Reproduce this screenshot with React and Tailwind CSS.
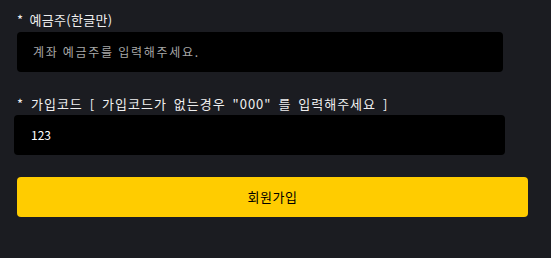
export default function App() {
  const font = { fontFamily: '"Noto Sans CJK KR", "Noto Sans", sans-serif' };
  return (
    <div className="w-[551px] h-[258px] bg-[#1b1c21] text-white" style={font}>
      <div className="flex flex-col pt-[12px]">
        <div className="px-[17px] text-[13px] tracking-[0.3px] [word-spacing:3px] leading-[16px] h-[16px] text-[#f0f0f0]">* 예금주(한글만)</div>
        <div className="mt-[4px] ml-[17px] w-[486px] h-[40px] bg-black rounded-[4px] flex items-center pl-[16px] text-[12px] tracking-[1.7px] text-[#a8a8a8]">
          계좌 예금주를 입력해주세요.
        </div>
        <div className="mt-[24px] px-[17px] text-[13px] tracking-[1px] [word-spacing:3px] leading-[16px] h-[16px] text-[#f0f0f0] whitespace-nowrap">
          * 가입코드 [ 가입코드가 없는경우 "000" 를 입력해주세요 ]
        </div>
        <div className="mt-[3px] ml-[14px] w-[491px] h-[40px] bg-black rounded-[4px] flex items-center pl-[17px] text-[12px] text-white">
          123
        </div>
        <button className="mt-[22px] ml-[17px] w-[511px] h-[40px] bg-[#ffcc00] rounded-[4px] flex items-center justify-center text-[13px] tracking-[0.5px] text-black">
          회원가입
        </button>
      </div>
    </div>
  );
}
